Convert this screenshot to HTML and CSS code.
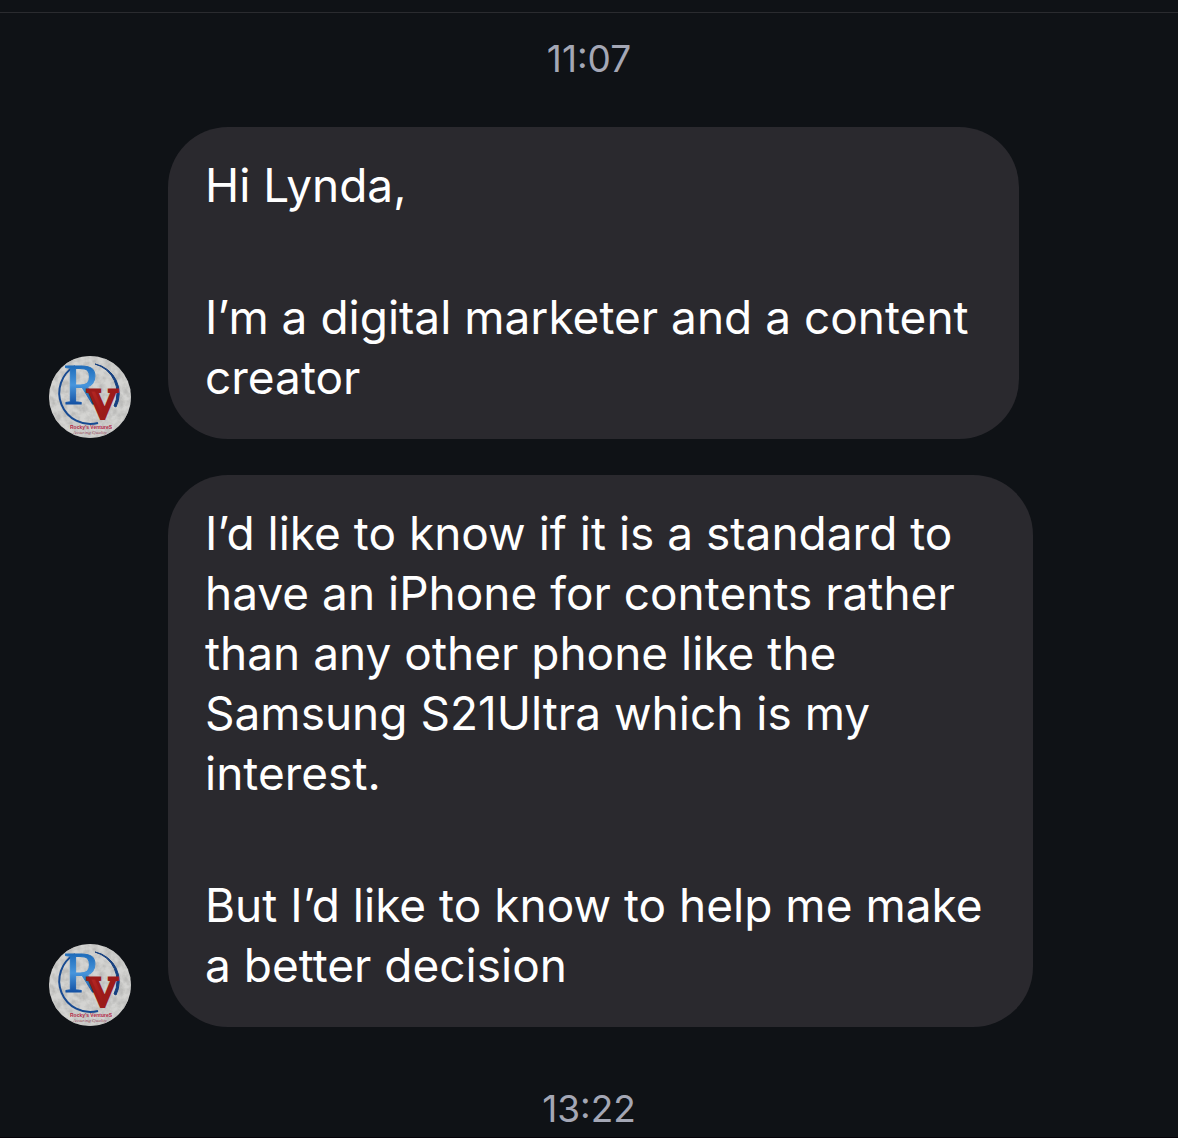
FILE: index.html
```html
<!DOCTYPE html>
<html lang="en">
  <head>
    <meta charset="utf-8">
    <meta name="viewport" content="width=device-width, initial-scale=1">
    <title>Messages</title>
    <link rel="stylesheet" href="styles.css">
  </head>
  <body>
    <svg class="sprite" aria-hidden="true">
      <defs>
        <filter id="paper" x="0" y="0" width="1" height="1">
          <feTurbulence type="fractalNoise" baseFrequency=".16" numOctaves="3" seed="4"/>
          <feColorMatrix values="0 0 0 0 .5  0 0 0 0 .5  0 0 0 0 .49  2.4 0 0 0 -.8"/>
          <feComposite in2="SourceGraphic" operator="in" result="grain"/>
          <feMerge>
            <feMergeNode in="SourceGraphic"/>
            <feMergeNode in="grain"/>
          </feMerge>
        </filter>
        <linearGradient id="blue" x1="0" y1="0" x2="0" y2="1">
          <stop offset=".2" stop-color="#1f6dbb"/>
          <stop offset=".5" stop-color="#4795dc"/>
          <stop offset=".8" stop-color="#1553a5"/>
        </linearGradient>
        <linearGradient id="red" x1="0" y1="0" x2="1" y2="1">
          <stop offset="0" stop-color="#bd2c27"/>
          <stop offset=".5" stop-color="#a31d1b"/>
          <stop offset="1" stop-color="#7d1415"/>
        </linearGradient>
        <symbol id="logo" viewBox="0 0 82 82">
          <circle cx="41" cy="41" r="41" fill="#d4d4d2" filter="url(#paper)"/>
          <path d="M26 10A31 31 0 0 0 49 67" fill="none" stroke="#174a92" stroke-width="2"/>
          <path d="M46 8A30 30 0 0 1 67 51L65 50A30 30 0 0 0 46 8Z" fill="#143f80" stroke="#143f80"/>
          <text class="logo__r" x="15" y="48">R</text>
          <text class="logo__v" x="38" y="62">V</text>
          <text class="logo__name" x="42" y="73">Rocky’s VentureS</text>
          <text class="logo__tag" x="41" y="78">Assuring Quality</text>
        </symbol>
      </defs>
    </svg>

    <main class="chat">
      <time class="chat__time">11:07</time>

      <div class="message">
        <svg class="message__avatar" role="img" aria-label="Rocky’s VentureS"><use href="#logo"/></svg>
        <div class="message__bubble">
          <p>Hi Lynda,</p>
          <p>I’m a digital marketer and a content<br>creator</p>
        </div>
      </div>

      <div class="message">
        <svg class="message__avatar" role="img" aria-label="Rocky’s VentureS"><use href="#logo"/></svg>
        <div class="message__bubble">
          <p>I’d like to know if it is a standard to<br>have an iPhone for contents rather<br>than any other phone like the<br>Samsung S21Ultra which is my<br>interest.</p>
          <p>But I’d like to know to help me make<br>a better decision</p>
        </div>
      </div>

      <time class="chat__time">13:22</time>
    </main>
  </body>
</html>
```

FILE: styles.css
```css
body {
  margin: 0;
  background: #0f1216;
  color: #fff;
  font-family: Inter, "Liberation Sans", sans-serif;
}

.sprite {
  position: absolute;
  width: 0;
  height: 0;
}

.chat {
  margin-top: 12px;
  border-top: 1px solid #2a2b2f;
  border-bottom: 1px solid #050208;
}
.chat__time {
  display: block;
  padding: 24px 0 6px;
  color: #a4a7b5;
  font-size: 37px;
  line-height: 44px;
  text-align: center;
}

.message {
  display: flex;
  align-items: flex-end;
  gap: 37px;
  margin: 0 48px 36px 49px;
}
.chat__time + .message {
  margin-top: 40px;
}
.message__avatar {
  flex: none;
  width: 82px;
  height: 82px;
  margin-bottom: 1px;
}
.message__bubble {
  display: flex;
  flex-direction: column;
  gap: 72px;
  padding: 28px 50px 32px 37px;
  border-radius: 60px;
  background: #2a292e;
  font-size: 46px;
  line-height: 60px;
}
.message__bubble p {
  margin: 0;
}

.logo__r {
  fill: url(#blue);
  stroke: url(#blue);
  stroke-width: 1px;
  font: 56px "Liberation Serif", serif;
}
.logo__v {
  fill: url(#red);
  stroke: #9c1b1a;
  stroke-width: 3px;
  font: bold 43px "Liberation Serif", serif;
}
.logo__name {
  fill: #b52a48;
  font: bold 5px "Liberation Sans", sans-serif;
  text-anchor: middle;
}
.logo__tag {
  fill: #9a4a5c;
  font: italic 5px "Liberation Serif", serif;
  text-anchor: middle;
}
```
